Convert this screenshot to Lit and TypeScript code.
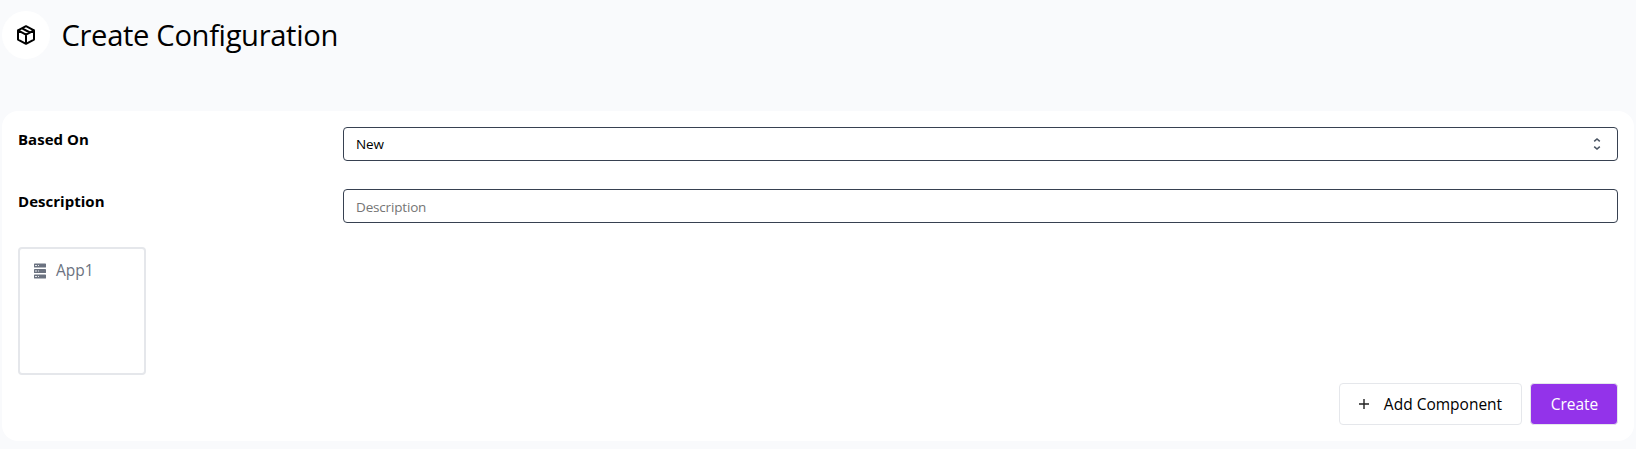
import { LitElement, html, css } from "lit";
import { customElement } from "lit/decorators.js";

@customElement("app-root")
export class AppRoot extends LitElement {
  static styles = css`
    :host {
      display: flex;
      flex-direction: column;
      box-sizing: border-box;
      height: 449px;
      padding: 11px 2px 8px;
      background: #f9fafc;
      color: #000;
      font-family: "Segoe UI", "Open Sans", "Noto Sans", sans-serif;
      font-size: 15.5px;
      line-height: 24px;
    }
    * { box-sizing: border-box; }
    svg { display: block; flex: none; }
    header { display: flex; align-items: center; gap: 11.5px; height: 48px; margin-bottom: 52px; }
    .badge {
      display: flex; align-items: center; justify-content: center;
      width: 48px; height: 48px; border-radius: 50%; background: #fff;
    }
    h1 { margin: 0; font-size: 29.2px; line-height: 36px; font-weight: 400; letter-spacing: -0.35px; }
    .card {
      display: flex; flex-direction: column; height: 330px; padding: 16px;
      background: #fff; border-radius: 16px;
    }
    .row { display: grid; grid-template-columns: 325px 1fr; height: 34px; margin-bottom: 28px; }
    .row + .row { margin-bottom: 24px; }
    .label { font-weight: 700; font-size: 15px; letter-spacing: 0.03px; }
    .field {
      display: flex; align-items: center; justify-content: space-between;
      height: 34px; padding: 0 12px; border: 1px solid #374151; border-radius: 4px;
      font-size: 13.5px; line-height: 20px; letter-spacing: -0.17px;
    }
    .hint { color: #757575; padding-top: 1px; }
    .tile {
      display: flex; align-items: flex-start; gap: 10px; width: 128px; height: 128px;
      padding: 9px 14px; border: 2px solid #e5e7eb; border-radius: 4px; color: #6b7280;
    }
    .tile svg { margin-top: 5px; }
    .actions { display: flex; justify-content: flex-end; align-items: center; gap: 8px; margin-top: 8px; height: 42px; }
    button {
      display: flex; align-items: center; justify-content: center; padding: 0;
      font: inherit; border: 1px solid #e5e7eb; border-radius: 4px; margin: 0; color: #000; white-space: nowrap;
    }
    .add { width: 183px; height: 42px; gap: 15px; background: #fff; }
    .create { width: 88px; height: 42px; padding-left: 1px; background: #9333ea; color: #fff; }
  `;

  render() {
    return html`
      <header>
        <div class="badge">
          <svg width="20" height="20" viewBox="0 0 20 20" fill="none" stroke="#000" stroke-width="2" stroke-linejoin="round" stroke-linecap="round">
            <path d="M10 1.2 18 5.4v9.2L10 18.8 2 14.6V5.4zM2 5.4l8 4.2 8-4.2M10 9.6v9.2M6 3.3l8 4.2" />
          </svg>
        </div>
        <h1><span>Create Configuration</span></h1>
      </header>
      <section class="card">
        <div class="row">
          <span class="label"><span>Based On</span></span>
          <div class="field">
            <span class="new">New</span>
            <svg width="16" height="16" viewBox="0 0 16 16" fill="none" stroke="#4b5563" stroke-width="1.5">
              <path d="M5.2 5.4 8 2.9l2.8 2.5M5.2 10.6 8 13.1l2.8-2.5" />
            </svg>
          </div>
        </div>
        <div class="row">
          <span class="label"><span>Description</span></span>
          <div class="field"><span class="hint">Description</span></div>
        </div>
        <div class="tile">
          <svg width="12" height="16" viewBox="0 0 12 16" fill="#6b7280">
            <rect y="0.4" width="12" height="4.2" rx="0.7" />
            <rect y="5.9" width="12" height="4.2" rx="0.7" />
            <rect y="11.4" width="12" height="4.2" rx="0.7" />
            <path fill="#e5e7eb" d="M1 2h2v1H1zM4 2h1v1H4zM1 7.5h2v1H1zM4 7.5h1v1H4zM1 13h2v1H1zM4 13h1v1H4z" />
          </svg>
          <span class="app">App1</span>
        </div>
        <div class="actions">
          <button class="add">
            <svg width="10" height="10" viewBox="0 0 10 10" stroke="#222" stroke-width="1.4"><path d="M0 5h10M5 0v10" /></svg>
            <span>Add Component</span>
          </button>
          <button class="create"><span>Create</span></button>
        </div>
      </section>
    `;
  }
}
